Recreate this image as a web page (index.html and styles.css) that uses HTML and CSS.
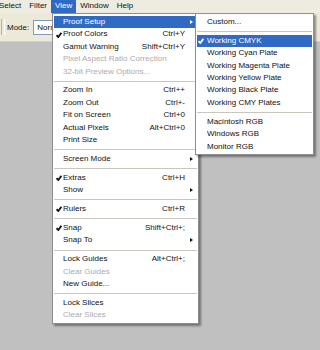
FILE: index.html
```html
<!DOCTYPE html>
<html lang="en">
<head>
    <meta charset="UTF-8">
    <title>View menu</title>
    <link rel="stylesheet" href="styles.css">
</head>
<body>

    <div class="menubar">
        <span class="mb-item first">Select</span>
        <span class="mb-item">Filter</span>
        <span class="mb-item open">View</span>
        <span class="mb-item">Window</span>
        <span class="mb-item">Help</span>
    </div>

    <div class="toolbar">
        <span class="grip"></span>
        <span class="mode-label">Mode:</span>
        <span class="mode-select">Normal</span>
    </div>

    <div class="workspace"></div>

    <!-- View menu -->
    <div class="menu main-menu">
        <div class="row active"><span class="chk"></span><span class="label">Proof Setup</span><span class="key"></span><span class="arrow"></span></div>
        <div class="row"><span class="chk"><svg viewBox="0 0 6 6"><path d="M0.6 3.2 L2.3 5 L5.4 0.8"/></svg></span><span class="label">Proof Colors</span><span class="key">Ctrl+Y</span><span class="arrow"></span></div>
        <div class="row"><span class="chk"></span><span class="label">Gamut Warning</span><span class="key">Shift+Ctrl+Y</span><span class="arrow"></span></div>
        <div class="row off"><span class="chk"></span><span class="label">Pixel Aspect Ratio Correction</span><span class="key"></span><span class="arrow"></span></div>
        <div class="row off"><span class="chk"></span><span class="label">32-bit Preview Options...</span><span class="key"></span><span class="arrow"></span></div>
        <div class="sep"></div>
        <div class="row"><span class="chk"></span><span class="label">Zoom In</span><span class="key">Ctrl++</span><span class="arrow"></span></div>
        <div class="row"><span class="chk"></span><span class="label">Zoom Out</span><span class="key">Ctrl+-</span><span class="arrow"></span></div>
        <div class="row"><span class="chk"></span><span class="label">Fit on Screen</span><span class="key">Ctrl+0</span><span class="arrow"></span></div>
        <div class="row"><span class="chk"></span><span class="label">Actual Pixels</span><span class="key">Alt+Ctrl+0</span><span class="arrow"></span></div>
        <div class="row"><span class="chk"></span><span class="label">Print Size</span><span class="key"></span><span class="arrow"></span></div>
        <div class="sep"></div>
        <div class="row"><span class="chk"></span><span class="label">Screen Mode</span><span class="key"></span><span class="arrow sub"></span></div>
        <div class="sep"></div>
        <div class="row"><span class="chk"><svg viewBox="0 0 6 6"><path d="M0.6 3.2 L2.3 5 L5.4 0.8"/></svg></span><span class="label">Extras</span><span class="key">Ctrl+H</span><span class="arrow"></span></div>
        <div class="row"><span class="chk"></span><span class="label">Show</span><span class="key"></span><span class="arrow sub"></span></div>
        <div class="sep"></div>
        <div class="row"><span class="chk"><svg viewBox="0 0 6 6"><path d="M0.6 3.2 L2.3 5 L5.4 0.8"/></svg></span><span class="label">Rulers</span><span class="key">Ctrl+R</span><span class="arrow"></span></div>
        <div class="sep"></div>
        <div class="row"><span class="chk"><svg viewBox="0 0 6 6"><path d="M0.6 3.2 L2.3 5 L5.4 0.8"/></svg></span><span class="label">Snap</span><span class="key">Shift+Ctrl+;</span><span class="arrow"></span></div>
        <div class="row"><span class="chk"></span><span class="label">Snap To</span><span class="key"></span><span class="arrow sub"></span></div>
        <div class="sep"></div>
        <div class="row"><span class="chk"></span><span class="label">Lock Guides</span><span class="key">Alt+Ctrl+;</span><span class="arrow"></span></div>
        <div class="row off"><span class="chk"></span><span class="label">Clear Guides</span><span class="key"></span><span class="arrow"></span></div>
        <div class="row"><span class="chk"></span><span class="label">New Guide...</span><span class="key"></span><span class="arrow"></span></div>
        <div class="sep"></div>
        <div class="row"><span class="chk"></span><span class="label">Lock Slices</span><span class="key"></span><span class="arrow"></span></div>
        <div class="row off"><span class="chk"></span><span class="label">Clear Slices</span><span class="key"></span><span class="arrow"></span></div>
    </div>

    <!-- Proof Setup submenu -->
    <div class="menu sub-menu">
        <div class="row"><span class="chk"></span><span class="label">Custom...</span></div>
        <div class="sep"></div>
        <div class="row active"><span class="chk"><svg viewBox="0 0 6 6"><path d="M0.6 3.2 L2.3 5 L5.4 0.8"/></svg></span><span class="label">Working CMYK</span></div>
        <div class="row"><span class="chk"></span><span class="label">Working Cyan Plate</span></div>
        <div class="row"><span class="chk"></span><span class="label">Working Magenta Plate</span></div>
        <div class="row"><span class="chk"></span><span class="label">Working Yellow Plate</span></div>
        <div class="row"><span class="chk"></span><span class="label">Working Black Plate</span></div>
        <div class="row"><span class="chk"></span><span class="label">Working CMY Plates</span></div>
        <div class="sep"></div>
        <div class="row"><span class="chk"></span><span class="label">Macintosh RGB</span></div>
        <div class="row"><span class="chk"></span><span class="label">Windows RGB</span></div>
        <div class="row"><span class="chk"></span><span class="label">Monitor RGB</span></div>
    </div>

</body>
</html>
```

FILE: styles.css
```css
body {
    margin: 0;
    width: 320px;
    height: 350px;
    overflow: hidden;
    background-color: #c0c0c0;
    font-family: "Liberation Sans", Arial, sans-serif;
    font-size: 8px;
    color: #111;
    position: relative;
}

.menubar {
    display: flex;
    height: 13px;
    background-color: #eeebe0;
    line-height: 12px;
}

.mb-item {
    padding: 0 4px;
    white-space: nowrap;
}

.mb-item.first {
    margin-left: -5px;
}

.mb-item.open {
    background-color: #316ac5;
    color: white;
}

.toolbar {
    display: flex;
    align-items: center;
    height: 28px;
    background-color: #ece9d8;
    border-bottom: 1px solid #d6d2c2;
}

.grip {
    width: 2px;
    height: 16px;
    margin-left: 1px;
    border-left: 1px solid #b8b4a4;
    border-right: 1px solid #fff;
}

.mode-label {
    margin-left: 2px;
    margin-top: 1px;
}

.mode-select {
    margin-left: 4px;
    margin-top: 1px;
    padding: 0 3px;
    height: 13px;
    line-height: 13px;
    width: 40px;
    background-color: white;
    border: 1px solid #7f9db9;
}

/* menus */
.menu {
    position: absolute;
    top: 13px;
    box-sizing: border-box;
    background-color: white;
    border: 1px solid #8e8e8e;
    padding: 2px 1px 1px 1px;
    box-shadow: 2px 2px 2px rgba(0, 0, 0, 0.4);
}

.main-menu {
    left: 52px;
    width: 147px;
    z-index: 1;
}

.sub-menu {
    left: 195px;
    width: 119px;
    z-index: 2;
}

.row {
    display: flex;
    align-items: center;
    height: 12.4px;
    line-height: 12.4px;
    white-space: nowrap;
}

.row.active {
    background-color: #316ac5;
    color: white;
}

.row.off {
    color: #ababab;
}

.chk {
    width: 9px;
    height: 12px;
    display: flex;
    align-items: center;
    justify-content: center;
    flex-shrink: 0;
}

.sub-menu .chk {
    width: 10px;
    justify-content: flex-start;
    padding-left: 1px;
    box-sizing: border-box;
}

.chk svg {
    width: 6px;
    height: 6px;
    fill: none;
    stroke: currentColor;
    stroke-width: 1.8;
}

.label {
    flex: 1;
    overflow: hidden;
}

.key {
    text-align: right;
}

.arrow {
    width: 12px;
    height: 12px;
    flex-shrink: 0;
    position: relative;
}

.arrow.sub::after,
.row.active .arrow::after {
    content: "";
    position: absolute;
    left: 5px;
    top: 3.5px;
    border-left: 3px solid currentColor;
    border-top: 2.5px solid transparent;
    border-bottom: 2.5px solid transparent;
}

.sep {
    height: 6.5px;
    display: flex;
    align-items: center;
}

.sep::before {
    content: "";
    flex: 1;
    height: 1px;
    background-color: #c8c6bd;
}
```
